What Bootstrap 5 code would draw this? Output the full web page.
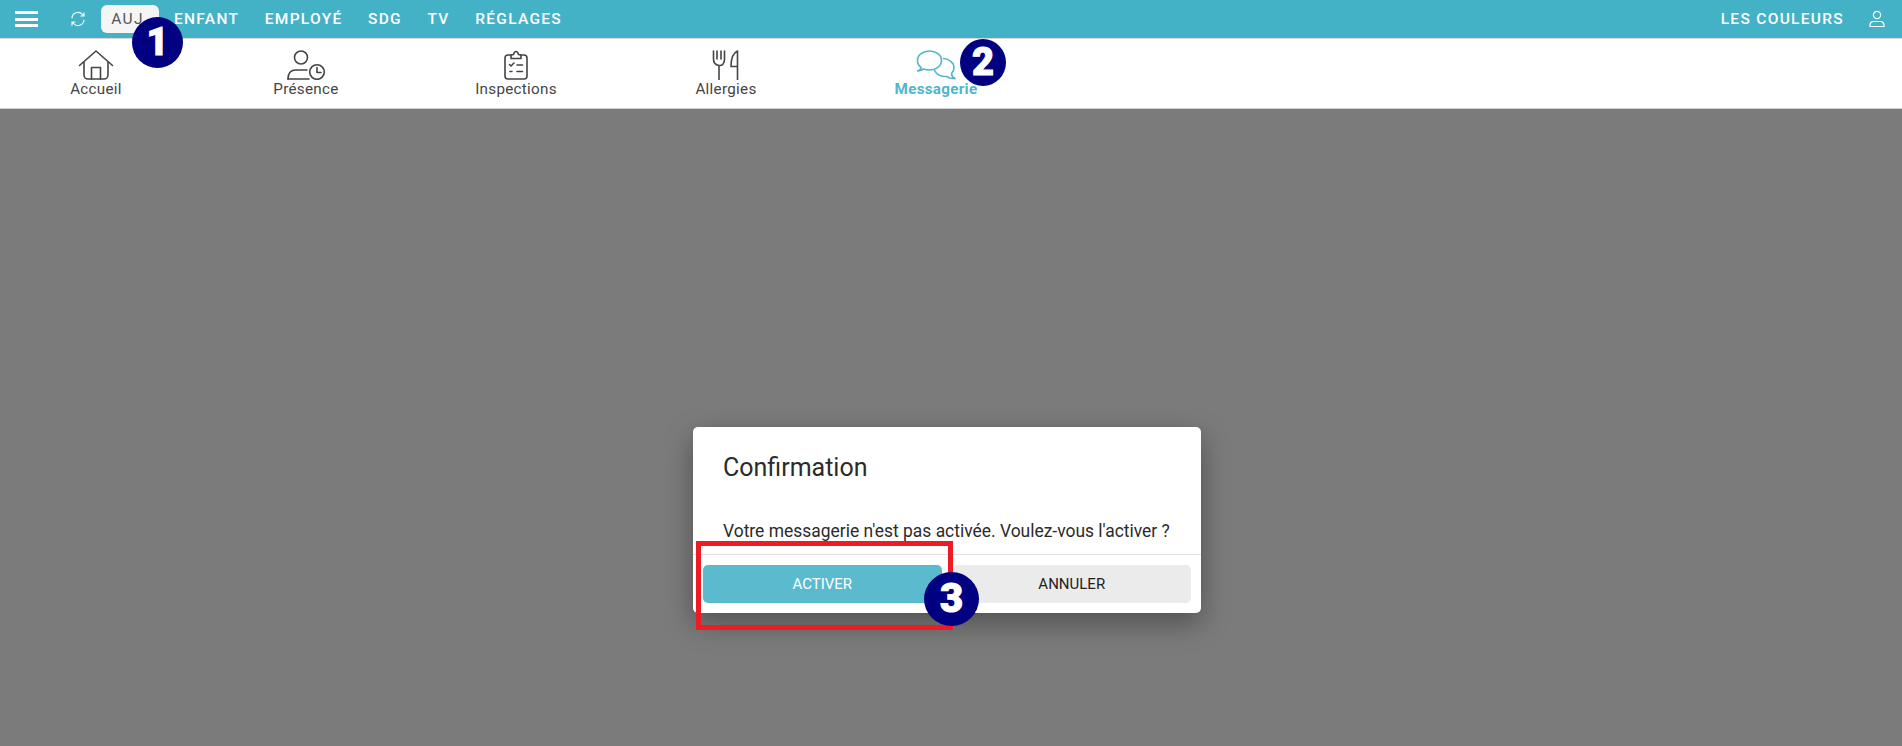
<!DOCTYPE html>
<html lang="fr">
<head>
  <meta charset="UTF-8">
  <title>Messagerie</title>
  <link href="https://cdn.jsdelivr.net/npm/bootstrap@5.3.0/dist/css/bootstrap.min.css" rel="stylesheet">
  <style>
    html, body { height: 100%; }
    body { font-family: Roboto, "Liberation Sans", sans-serif; background: #7b7b7b; position: relative; overflow: hidden; }
    .page-wrap { height: 746px; }
    .top-menu { height: 39px; background: #43b2c7; border-bottom: 1px solid #d8d8d8; padding: 0 17px 0 15px; }
    .menu-btn { width: 23px; height: 16px; border-top: 3px solid #fff; border-bottom: 3px solid #fff; position: relative; margin-right: 32px; }
    .menu-btn::after { content: ""; position: absolute; left: 0; right: 0; top: 3.5px; height: 3px; background: #fff; }
    .top-link { color: #fff; font-size: 15.5px; font-weight: 500; letter-spacing: 1.3px; text-decoration: none; line-height: 28px; }
    .top-link.today { background: #f5f5f5; color: #555; border-radius: 6px; width: 58px; padding-right: 5px; text-align: center; font-weight: 400; margin: 0 15px 0 15px; }
    .top-gap { margin-right: 25.5px; }
    .sub-menu { height: 70px; background: #fff; border-bottom: 1px solid #cfcfcf; padding-left: 0; margin-left: -9px; }
    .sub-item { width: 210px; height: 69px; padding-top: 11px; color: #444; font-size: 15.2px; letter-spacing: .3px; text-decoration: none; line-height: 17px; }
    .sub-item svg { display: block; height: 30px; margin-bottom: 1px; fill: none; stroke: currentColor; stroke-width: 1.6; stroke-linecap: round; stroke-linejoin: round; }
    .sub-item.active { color: #4fb6cb; font-weight: 700; }
    .dim-area { height: 637px; padding-top: 318px; padding-right: 8px; }
    .confirm-box { width: 508px; height: 186px; border: 0; border-radius: 5px; box-shadow: 0 10px 28px rgba(0,0,0,.35); }
    .confirm-title { font-size: 25px; font-weight: 400; color: #2b2b2b; margin: 0; padding: 25px 30px 0; line-height: 32px; }
    .confirm-text { font-size: 17.45px; color: #2b2b2b; padding: 35px 10px 0 30px; line-height: 24px; height: 70px; white-space: nowrap; }
    .confirm-foot { border-top: 1px solid #e2e2e2; padding: 10px; gap: 11px; }
    .confirm-btn { flex: 1; height: 38px; border: 0; border-radius: 5px; font-size: 15px; padding: 0; }
    .confirm-btn.yes, .confirm-btn.yes:hover { background: #5abbcf; color: #fff; }
    .confirm-btn.no, .confirm-btn.no:hover { background: #ebebeb; color: #222; }
    /* annotations over the screenshot */
    .note-dot { position: absolute; border-radius: 50%; background: #000080; color: #fff; font-family: Roboto, sans-serif; font-weight: 900; -webkit-text-stroke: 1px #fff; display: flex; align-items: center; justify-content: center; }
    .note-1 { left: 132px; top: 17px; width: 51px; height: 51px; font-size: 38px; }
    .note-2 { left: 960px; top: 39px; width: 46px; height: 47px; font-size: 38px; }
    .note-3 { left: 924px; top: 572px; width: 55px; height: 54px; font-size: 40px; }
    .note-frame { position: absolute; left: 696px; top: 541px; width: 257px; height: 89px; border: 5px solid #ed1c24; }
  </style>
</head>
<body>
  <div class="page-wrap d-flex flex-column">
    <!-- barre du haut -->
    <nav class="top-menu d-flex align-items-center flex-shrink-0">
      <span class="menu-btn"></span>
      <svg width="16" height="16" viewBox="0 0 16 16" fill="none" stroke="#fff" stroke-width="1.1" stroke-linecap="round" stroke-linejoin="round">
        <path d="M2 7A6 6 0 0 1 12.500 3.500L14 5M14 1.800V5H10.800"/>
        <path d="M14 9A6 6 0 0 1 3.500 12.500L2 11M2 14.200V11H5.200"/>
      </svg>
      <a href="#" class="top-link today">AUJ</a>
      <a href="#" class="top-link top-gap">ENFANT</a>
      <a href="#" class="top-link top-gap">EMPLOYÉ</a>
      <a href="#" class="top-link top-gap">SDG</a>
      <a href="#" class="top-link top-gap">TV</a>
      <a href="#" class="top-link">RÉGLAGES</a>
      <a href="#" class="top-link ms-auto" style="margin-right:25px">LES COULEURS</a>
      <svg width="16" height="18" viewBox="0 0 16 18" fill="none" stroke="#fff" stroke-width="1.2">
        <circle cx="8" cy="5" r="3.600"/>
        <path d="M1 16.500V15a3.500 3.500 0 0 1 3.500-3.500h7A3.500 3.500 0 0 1 15 15v1.500z" stroke-linejoin="round"/>
      </svg>
    </nav>

    <!-- menu icones -->
    <div class="sub-menu d-flex flex-shrink-0 justify-content-start">
      <a href="#" class="sub-item d-flex flex-column align-items-center">
        <svg width="36" viewBox="0 0 36 30">
          <path d="M1.500 15.500L18 1L34.500 15.500"/>
          <path d="M6 12V25a4 4 0 0 0 4 4H26a4 4 0 0 0 4-4V12"/>
          <path d="M13.500 29V17.500H22.500V29"/>
        </svg>
        Accueil
      </a>
      <a href="#" class="sub-item d-flex flex-column align-items-center">
        <svg width="40" viewBox="0 0 40 30">
          <circle cx="15" cy="7.500" r="6.500"/>
          <path d="M2 29c0-6 3-9 8-9h11"/>
          <path d="M2 29H23"/>
          <circle cx="31" cy="22" r="7.300"/>
          <path d="M31 17.500V22.500H35"/>
        </svg>
        Présence
      </a>
      <a href="#" class="sub-item d-flex flex-column align-items-center">
        <svg width="24" viewBox="0 0 24 30">
          <path d="M7 5H4a3 3 0 0 0-3 3V26a3 3 0 0 0 3 3H20a3 3 0 0 0 3-3V8a3 3 0 0 0-3-3H17"/>
          <path d="M7 8.500V5L9.500 4.500C10 2.500 11 1.500 12 1.500S14 2.500 14.500 4.500L17 5V8.500z"/>
          <path d="M5.500 14.500L7 16L10 13M13 15H18.500M6 21.500H8M13 21.500H18.500"/>
        </svg>
        Inspections
      </a>
      <a href="#" class="sub-item d-flex flex-column align-items-center">
        <svg width="28" viewBox="0 0 28 30">
          <path d="M1.500 1V9c0 4 2 6 5.500 6.500S12.500 13 12.500 9V1M5 1V9M9 1V9M7 15.500V29.500"/>
          <path d="M25.500 29.500V1C21 3 19 9 19 16.500H25.500"/>
        </svg>
        Allergies
      </a>
      <a href="#" class="sub-item active d-flex flex-column align-items-center">
        <svg width="40" viewBox="0 0 40 30">
          <path d="M5 17.500C3 16 1.500 13.500 1.500 10.500C1.500 5 7 1 13.500 1S25.500 5 25.500 10.500S20 20 13.500 20C11 20 9 19.500 7.500 19C6 20 4 21 1.500 21C3.500 20.500 4.800 19 5 17.500z"/>
          <path d="M27.500 8.500C33 9 38 12.500 38 17.500C38 20 37 22 35.500 23.500C35.500 25.500 36.800 27.500 39 28.800C35.500 28.800 32.500 27.800 30.500 26.500C25.500 27 20.500 24.500 18.500 20.500"/>
        </svg>
        Messagerie
      </a>
    </div>

    <!-- zone grisee avec la confirmation -->
    <div class="dim-area d-flex justify-content-center flex-shrink-0">
      <div class="modal-content confirm-box bg-white">
        <h5 class="confirm-title">Confirmation</h5>
        <div class="confirm-text">Votre messagerie n'est pas activée. Voulez-vous l'activer ?</div>
        <div class="confirm-foot d-flex">
          <button type="button" class="btn confirm-btn yes">ACTIVER</button>
          <button type="button" class="btn confirm-btn no">ANNULER</button>
        </div>
      </div>
    </div>
  </div>

  <div class="note-frame"></div>
  <div class="note-dot note-1">1</div>
  <div class="note-dot note-2">2</div>
  <div class="note-dot note-3">3</div>

  <script src="https://cdn.jsdelivr.net/npm/bootstrap@5.3.0/dist/js/bootstrap.bundle.min.js"></script>
</body>
</html>
